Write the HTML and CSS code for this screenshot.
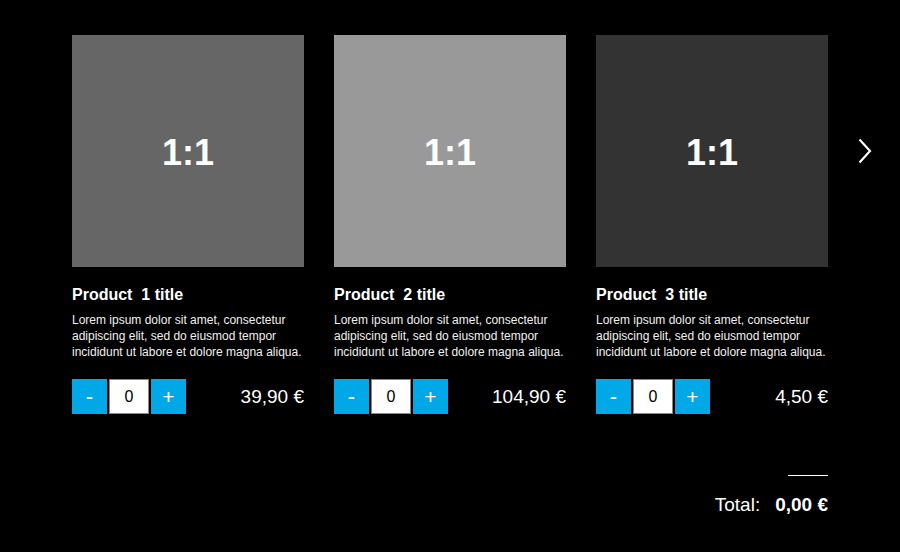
FILE: index.html
```html
<!DOCTYPE html>
<html>
<head>
<meta charset="utf-8">
<link rel="stylesheet" href="styles.css">
</head>
<body>
<div class="page">
  <div class="carousel">
    <div class="cards">
      <div class="card">
        <div class="thumb t1">1:1</div>
        <h2 class="title">Product&nbsp; 1 title</h2>
        <p class="desc">Lorem ipsum dolor sit amet, consectetur adipiscing elit, sed do eiusmod tempor incididunt ut labore et dolore magna aliqua.</p>
        <div class="buy">
          <div class="qty">
            <button class="btn minus">-</button>
            <div class="count">0</div>
            <button class="btn">+</button>
          </div>
          <div class="price">39,90 €</div>
        </div>
      </div>
      <div class="card">
        <div class="thumb t2">1:1</div>
        <h2 class="title">Product&nbsp; 2 title</h2>
        <p class="desc">Lorem ipsum dolor sit amet, consectetur adipiscing elit, sed do eiusmod tempor incididunt ut labore et dolore magna aliqua.</p>
        <div class="buy">
          <div class="qty">
            <button class="btn minus">-</button>
            <div class="count">0</div>
            <button class="btn">+</button>
          </div>
          <div class="price">104,90 €</div>
        </div>
      </div>
      <div class="card">
        <div class="thumb t3">1:1</div>
        <h2 class="title">Product&nbsp; 3 title</h2>
        <p class="desc">Lorem ipsum dolor sit amet, consectetur adipiscing elit, sed do eiusmod tempor incididunt ut labore et dolore magna aliqua.</p>
        <div class="buy">
          <div class="qty">
            <button class="btn minus">-</button>
            <div class="count">0</div>
            <button class="btn">+</button>
          </div>
          <div class="price">4,50 €</div>
        </div>
      </div>
    </div>
    <svg class="next" width="16" height="26" viewBox="0 0 16 26"><path d="M2.5 1.5 L13 13 L2.5 24.5" fill="none" stroke="#fff" stroke-width="2.2"/></svg>
  </div>
  <div class="summary">
    <div class="rule"></div>
    <div class="total"><span class="label">Total:</span><span class="sum">0,00 €</span></div>
  </div>
</div>
</body>
</html>
```
FILE: styles.css
```css
html, body {
  margin: 0;
  padding: 0;
  background: #000;
  color: #fff;
  font-family: "Liberation Sans", Arial, sans-serif;
}
.page {
  width: 756px;
  margin: 0 auto;
  padding-top: 35px;
}
.carousel {
  position: relative;
}
.cards {
  display: grid;
  grid-template-columns: repeat(3, 232px);
  column-gap: 30px;
}
.thumb {
  width: 232px;
  height: 232px;
  display: flex;
  align-items: center;
  justify-content: center;
  font-weight: bold;
  font-size: 36px;
  color: #fff;
  padding-top: 3px;
  box-sizing: border-box;
}
.t1 { background: #666; }
.t2 { background: #999; }
.t3 { background: #333; }
.title {
  margin: 18px 0 0;
  font-size: 16px;
  line-height: 20px;
  font-weight: bold;
}
.desc {
  margin: 7px 0 0;
  font-size: 12px;
  line-height: 16px;
  color: #f0f0f0;
}
.buy {
  margin-top: 19px;
  display: flex;
  align-items: center;
  justify-content: space-between;
}
.qty {
  display: flex;
  gap: 2px;
}
.btn {
  width: 35px;
  height: 35px;
  border: 0;
  padding: 0;
  margin: 0;
  background: #00a8e8;
  color: #fff;
  font-family: "Liberation Sans", Arial, sans-serif;
  font-size: 21px;
  line-height: 35px;
}
.minus {
  font-size: 22px;
  padding-bottom: 3px;
}
.count {
  box-sizing: border-box;
  width: 40px;
  height: 35px;
  background: #fff;
  border: 1px solid #888;
  color: #000;
  font-size: 16px;
  display: flex;
  align-items: center;
  justify-content: center;
}
.price {
  font-size: 19px;
  color: #fff;
}
.next {
  position: absolute;
  right: -45px;
  top: 103px;
}
.summary {
  margin-top: 61px;
  display: flex;
  flex-direction: column;
  align-items: flex-end;
}
.rule {
  width: 40px;
  height: 1px;
  background: #fff;
}
.total {
  margin-top: 18px;
  font-size: 19px;
}
.label {
  margin-right: 15px;
}
.sum {
  font-weight: bold;
}
```
